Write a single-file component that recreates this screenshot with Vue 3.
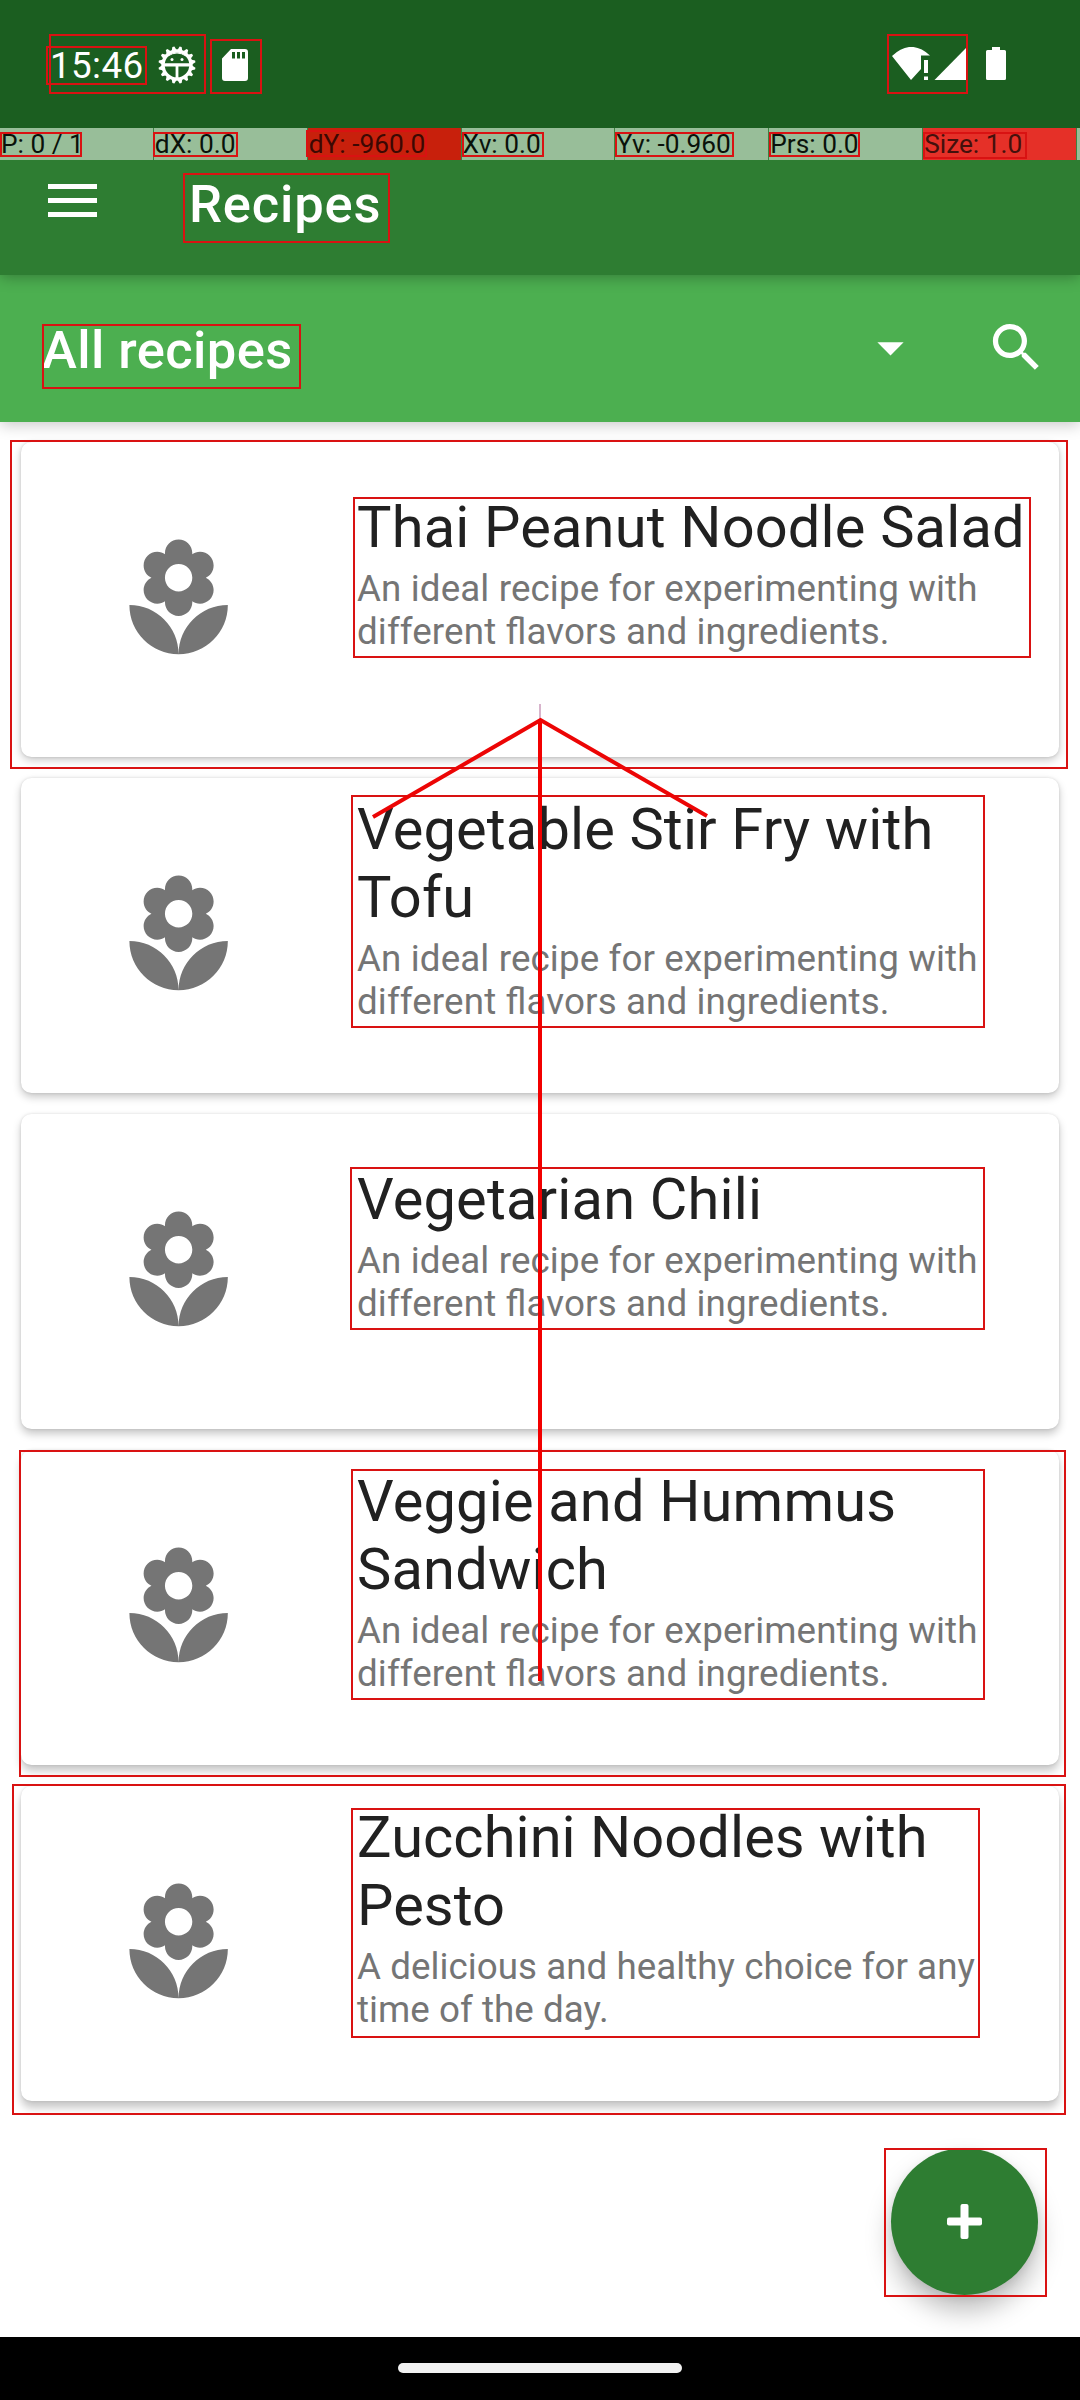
<script setup>
const ideal = ['An ideal recipe for experimenting with', 'different flavors and ingredients.']
const recipes = [
  { title: ['Thai Peanut Noodle Salad'], text: ideal, lift: 3, track: 0.18, textTrack: 0.12 },
  { title: ['Vegetable Stir Fry with', 'Tofu'], text: ideal, lift: 4, track: 0.15, textTrack: 0.12 },
  { title: ['Vegetarian Chili'], text: ideal, lift: 5, track: 0.18, textTrack: 0.12 },
  { title: ['Veggie and Hummus', 'Sandwich'], text: ideal, lift: 6, track: 0.18, textTrack: 0.12 },
  { title: ['Zucchini Noodles with', 'Pesto'], text: ['A delicious and healthy choice for any', 'time of the day.'], lift: 7, track: 0.07, textTrack: 0.04 },
]

const pointer = [
  { label: 'P: 0 / 1' },
  { label: 'dX: 0.0' },
  { label: 'dY: -960.0', tone: 'moved' },
  { label: 'Xv: 0.0' },
  { label: 'Yv: -0.960' },
  { label: 'Prs: 0.0' },
  { label: 'Size: 1.0', tone: 'size' },
]

// Highlight frames: left, top, right, bottom
const frames = [
  [49, 34, 206, 94], [46, 46, 147, 85], [210, 39, 262, 94],
  [0, 132, 82, 157], [153, 132, 238, 157], [306, 130, 427, 157],
  [462, 132, 544, 157], [615, 132, 734, 157], [769, 132, 860, 157],
  [923, 132, 1027, 159], [887, 34, 968, 94], [183, 173, 390, 243],
  [42, 324, 301, 389], [10, 440, 1068, 769], [353, 497, 1031, 658],
  [351, 795, 985, 1028], [350, 1167, 985, 1330], [19, 1450, 1066, 1777],
  [351, 1469, 985, 1700], [12, 1784, 1066, 2115], [351, 1808, 980, 2038],
  [884, 2148, 1047, 2297],
]

// Teeth of the gear in the status bar
const teeth = Array.from({ length: 16 }, (_, i) => i * 22.5 + 11.25)
</script>

<template>
  <div class="screen">
    <div class="status">
      <div class="status-left">
        <span class="clock">15:46</span>
        <svg class="gear" width="38" height="38" viewBox="-19 -19 38 38">
          <circle r="14" fill="none" stroke="#fff" stroke-width="3.4" />
          <path v-for="a in teeth" :key="a" d="M-2.6-14.5L-1-18.6H1L2.6-14.5Z" fill="#fff" :transform="`rotate(${a})`" />
          <path d="M-13 0H13M0 0V14" stroke="#fff" stroke-width="2.8" />
          <path d="M-12-1H12M-9-9Q0-15 9-9" stroke="#fff" stroke-width="1" fill="none" />
          <circle cx="-5" cy="-5.5" r="1.5" fill="#fff" /><circle cx="5" cy="-5.5" r="1.5" fill="#fff" />
        </svg>
        <svg class="sd" width="26" height="32" viewBox="0 0 26 32">
          <path fill="#fff" fill-rule="evenodd" d="M9 0H23Q26 0 26 3V29Q26 32 23 32H3Q0 32 0 29V9.500ZM10 3V9.500H13V3ZM15 3V9.500H18V3ZM20 3V9.500H23V3Z" />
        </svg>
      </div>
      <svg class="signals" width="116" height="34" viewBox="0 0 116 34">
        <g fill="#fff">
          <path d="M0 9Q19-9 38 8.500H29V22L19 33Z" />
          <path d="M32 13H36V26H32ZM32 29.500H36V33H32Z" />
          <path d="M42.500 33L74.500 .5V33Z" />
          <path d="M100 0H108V3H112.500Q114 3 114 4.500V31.500Q114 33 112.500 33H95.500Q94 33 94 31.500V4.500Q94 3 95.500 3H100Z" />
        </g>
      </svg>
    </div>

    <div class="pointer-bar">
      <div v-for="p in pointer" :key="p.label" class="cell" :class="p.tone">{{ p.label }}</div>
    </div>

    <header class="app-bar">
      <svg class="menu" width="49" height="33" viewBox="0 0 49 33"><path fill="#fff" d="M0 0H49V5H0ZM0 14H49V19H0ZM0 28H49V33H0Z" /></svg>
      <h1>Recipes</h1>
    </header>

    <div class="filter-bar">
      <h2>All recipes</h2>
      <svg class="caret" width="63" height="63" viewBox="0 0 24 24"><path fill="#fff" d="M7 10l5 5 5-5z" /></svg>
      <svg class="search" width="63" height="63" viewBox="0 0 24 24">
        <path fill="#fff" d="M15.500 14h-.79l-.28-.27C15.410 12.590 16 11.110 16 9.500 16 5.910 13.090 3 9.500 3S3 5.910 3 9.500 5.910 16 9.500 16c1.610 0 3.090-.59 4.230-1.570l.27.28v.79l5 4.990L20.490 19l-4.990-5zm-6 0C7.010 14 5 11.990 5 9.500S7.010 5 9.500 5 14 7.010 14 9.500 11.990 14 9.500 14z" />
      </svg>
    </div>

    <main class="list">
      <article
        v-for="r in recipes" :key="r.title[0]" class="card"
        :style="{ '--lift': r.lift + 'px', '--track': r.track + 'px', '--text-track': r.textTrack + 'px' }"
      >
        <div class="thumb">
          <svg width="131.250" height="131.250" viewBox="0 0 24 24">
            <path fill="#757575" d="M12 22c4.970 0 9-4.030 9-9-4.970 0-9 4.030-9 9zM5.600 10.250c0 1.380 1.120 2.500 2.500 2.500.53 0 1.010-.16 1.420-.44l-.02.19c0 1.380 1.120 2.500 2.500 2.500s2.500-1.120 2.500-2.500l-.02-.19c.4.28.89.44 1.420.44 1.380 0 2.500-1.120 2.500-2.500 0-1-.59-1.850-1.430-2.250.84-.4 1.430-1.250 1.430-2.250 0-1.380-1.120-2.500-2.500-2.500-.53 0-1.010.16-1.420.44l.02-.19C14.500 2.120 13.380 1 12 1S9.500 2.120 9.500 3.500l.02.19c-.4-.28-.89-.44-1.420-.44-1.380 0-2.500 1.120-2.500 2.500 0 1 .59 1.850 1.430 2.250-.84.4-1.430 1.250-1.430 2.250zM12 5.500c1.380 0 2.500 1.120 2.500 2.500s-1.120 2.500-2.500 2.500S9.500 9.380 9.500 8s1.120-2.500 2.500-2.500zM3 13c0 4.970 4.030 9 9 9 0-4.970-4.030-9-9-9z" />
          </svg>
        </div>
        <div class="copy">
          <h3><span v-for="l in r.title" :key="l">{{ l }}</span></h3>
          <p><span v-for="l in r.text" :key="l">{{ l }}</span></p>
        </div>
      </article>
    </main>

    <footer class="nav"><div class="pill"></div></footer>

    <button class="fab" aria-label="Add">
      <svg width="35" height="35" viewBox="0 0 35 35">
        <rect x="13.500" width="8" height="35" rx="2" fill="#fff" /><rect y="13.500" width="35" height="8" rx="2" fill="#fff" />
      </svg>
    </button>

    <svg class="overlay" width="1080" height="2400" viewBox="0 0 1080 2400" fill="none">
      <rect
        v-for="(f, i) in frames" :key="i" :x="f[0] + 1" :y="f[1] + 1"
        :width="f[2] - f[0] - 2" :height="f[3] - f[1] - 2" stroke="#d91212" stroke-width="2"
      />
      <path d="M540 704V722" stroke="#d8b4cc" stroke-width="2" />
      <path d="M540 719V1681" stroke="#f20000" stroke-width="4" />
      <path d="M373 817L540.500 720L707 816" stroke="#ec0505" stroke-width="4" />
    </svg>
  </div>
</template>

<style>
body { margin: 0; background: #fff; }
</style>

<style scoped>
.screen {
  position: relative;
  display: flex;
  flex-direction: column;
  width: 1080px;
  height: 2400px;
  overflow: hidden;
  background: #fff;
  font-family: Roboto, "Liberation Sans", sans-serif;
}
h1, h2, h3, p { margin: 0; font-weight: 400; }
svg { display: block; flex: none; }
.status {
  display: flex;
  justify-content: space-between;
  height: 128px;
  box-sizing: border-box;
  padding: 0 72px 0 50px;
  background: #1b5e20;
}
.status-left { display: flex; }
.clock { width: 108px; padding-top: 44px; color: #fff; font-size: 36.75px; line-height: 43px; letter-spacing: .4px; white-space: nowrap; }
.gear { margin-top: 46px; }
.sd { margin: 49px 0 0 26px; }
.signals { margin-top: 47px; }
.pointer-bar { position: relative; z-index: 4; display: flex; gap: 1px; height: 32px; background: linear-gradient(90deg, #3d8242 1077px, #98be99 1077px); }
.cell { flex: none; width: 152.860px; box-sizing: border-box; padding-left: 1px; background: #98be99; color: #0a120a; font-size: 26.250px; line-height: 32px; white-space: nowrap; }
.cell.moved { background: #c8200c; color: #3c0803; }
.cell.size { background: #e53028; color: #44100c; }
.app-bar {
  position: relative;
  z-index: 3;
  display: flex;
  height: 115px;
  background: #2e7d32;
  box-shadow: 0 2px 14px rgba(0, 0, 0, .3);
}
.menu { margin: 24px 0 0 48px; }
h1, h2 { color: #fff; font-size: 52.500px; line-height: 62px; font-weight: 500; white-space: nowrap; }
h1 { margin: 13px 0 0 92px; letter-spacing: .8px; }
.filter-bar {
  position: relative;
  z-index: 2;
  display: flex;
  height: 147px;
  background: #4caf50;
  box-shadow: 0 3px 14px rgba(0, 0, 0, .22);
}
h2 { flex: 1; margin: 44px 0 0 42px; letter-spacing: .4px; }
.caret { margin-top: 41px; }
.search { margin: 41px 32px 0 63px; }
.list { display: flex; flex-direction: column; gap: 21px; flex: 1; padding: 20px 21px 0; }
.card {
  display: flex;
  flex: none;
  height: 315px;
  border-radius: 10.500px;
  background: #fff;
  box-shadow: 0 var(--lift) 8px rgba(0, 0, 0, .22), 0 0 3px rgba(0, 0, 0, .12);
}
.thumb { display: flex; align-items: center; justify-content: center; width: 315px; }
.copy { display: flex; flex-direction: column; justify-content: center; padding: 0 0 52px 21px; white-space: nowrap; font-feature-settings: "liga" 1; }
.copy span { display: block; }
h3 { color: #212121; font-size: 57.750px; line-height: 67.700px; letter-spacing: var(--track); }
p { margin-top: 6px; color: #757575; font-size: 36.750px; line-height: 43px; letter-spacing: var(--text-track); }
.nav { display: flex; justify-content: center; height: 63px; background: #000; position: relative; z-index: 2; }
.pill { width: 284px; height: 10px; margin-top: 26px; border-radius: 5px; background: #f2f2f2; }
.fab {
  position: absolute;
  left: 891px;
  top: 2148px;
  display: flex;
  align-items: center;
  justify-content: center;
  width: 147px;
  height: 147px;
  padding: 0;
  border: 0;
  border-radius: 50%;
  background: #2e7d32;
  box-shadow: 0 16px 26px rgba(0, 0, 0, .26), 0 3px 8px rgba(0, 0, 0, .08);
}
.overlay { position: absolute; left: 0; top: 0; z-index: 10; pointer-events: none; }
</style>
